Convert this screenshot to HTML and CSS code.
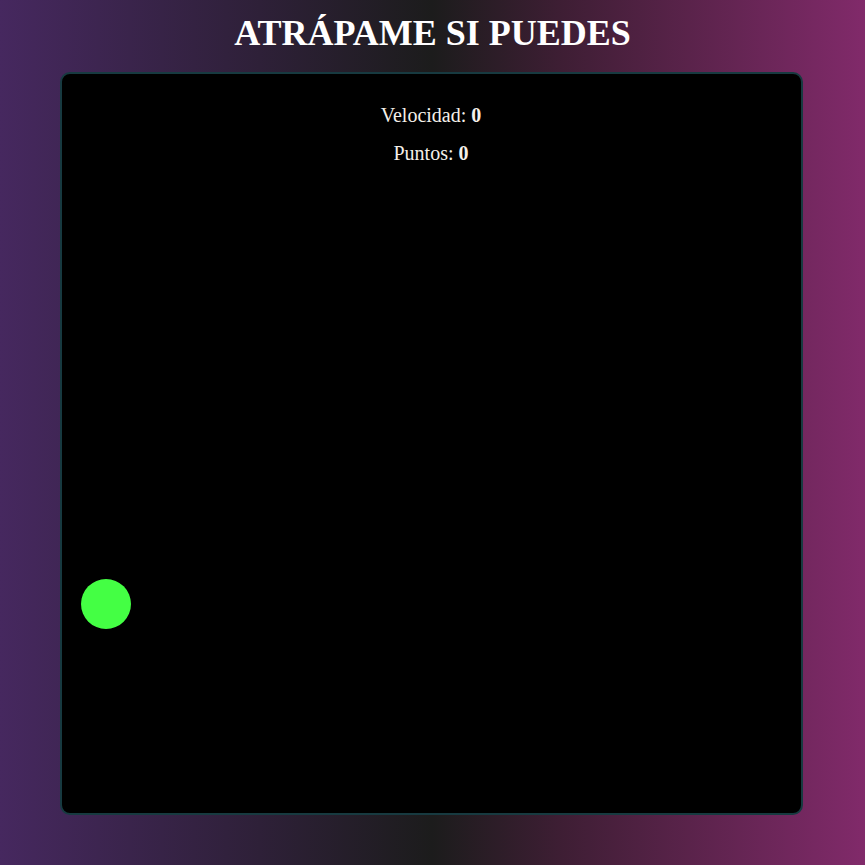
FILE: index.html
```html
<!DOCTYPE html>
<html lang="es">
<head>
<meta charset="utf-8">
<title>Atrápame si puedes</title>
<link rel="stylesheet" href="styles.css">
</head>
<body>
<h1 class="title">ATRÁPAME SI PUEDES</h1>
<div class="board">
  <div class="stats">
    <p class="stat">Velocidad: <strong>0</strong></p>
    <p class="stat">Puntos: <strong>0</strong></p>
  </div>
  <div class="ball" style="left: 19px; top: 505px;"></div>
</div>
</body>
</html>
```
FILE: styles.css
```css
html, body {
  margin: 0;
  padding: 0;
  height: 100%;
}
body {
  background: linear-gradient(to right, #46285f 0%, #2e2038 30%, #1c1c1c 50%, #3e1e34 65%, #812a6a 100%);
  font-family: "Liberation Serif", serif;
  color: #f4f0ea;
  display: flex;
  flex-direction: column;
  align-items: center;
}
.title {
  font-family: "Liberation Serif", serif;
  font-weight: bold;
  font-size: 36px;
  margin: 13px 0 19px;
  line-height: 40px;
  color: #ffffff;
}
.board {
  position: relative;
  width: 739px;
  height: 739px;
  background: #000;
  border: 2px solid #173a40;
  border-radius: 10px;
  margin-left: -3px;
}
.stats {
  display: flex;
  flex-direction: column;
  align-items: center;
  gap: 18px;
  padding-top: 31px;
}
.stat {
  margin: 0;
  font-size: 20px;
  line-height: 20px;
}
.stat strong {
  font-weight: bold;
}
.ball {
  position: absolute;
  width: 50px;
  height: 50px;
  border-radius: 50%;
  background: #44ff44;
}
```
